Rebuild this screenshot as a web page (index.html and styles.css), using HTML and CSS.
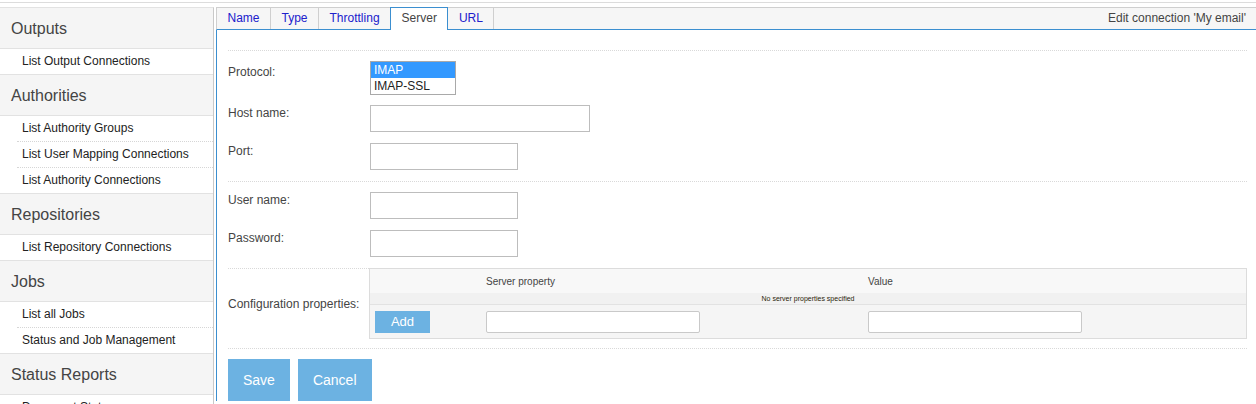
FILE: index.html
```html
<!DOCTYPE html>
<html lang="en">
<head>
<meta charset="utf-8">
<title>Edit connection</title>
<link rel="stylesheet" href="styles.css">
</head>
<body>
<div class="topline"></div>
<div class="layout">
  <nav class="sidebar">
    <div class="nav-head">Outputs</div>
    <ul class="nav-list">
      <li>List Output Connections</li>
    </ul>
    <div class="nav-head">Authorities</div>
    <ul class="nav-list">
      <li>List Authority Groups</li>
      <li>List User Mapping Connections</li>
      <li>List Authority Connections</li>
    </ul>
    <div class="nav-head">Repositories</div>
    <ul class="nav-list">
      <li>List Repository Connections</li>
    </ul>
    <div class="nav-head">Jobs</div>
    <ul class="nav-list">
      <li>List all Jobs</li>
      <li>Status and Job Management</li>
    </ul>
    <div class="nav-head">Status Reports</div>
    <ul class="nav-list">
      <li>Document Status</li>
      <li>Document Queue</li>
    </ul>
  </nav>
  <main class="main">
    <div class="tabbar">
      <ul class="tabs">
        <li class="tab">Name</li>
        <li class="tab">Type</li>
        <li class="tab">Throttling</li>
        <li class="tab active">Server</li>
        <li class="tab">URL</li>
      </ul>
      <div class="title">Edit connection 'My email'</div>
    </div>
    <div class="panel">
      <div class="sep"></div>
      <div class="row row-protocol">
        <div class="lbl lbl-protocol">Protocol:</div>
        <div class="listbox">
          <div class="opt selected">IMAP</div>
          <div class="opt">IMAP-SSL</div>
        </div>
      </div>
      <div class="row row-gap10">
        <div class="lbl">Host name:</div>
        <input class="text w-long" type="text">
      </div>
      <div class="row row-gap11">
        <div class="lbl">Port:</div>
        <input class="text w-short" type="text">
      </div>
      <div class="sep sep-gap"></div>
      <div class="row row-gap10">
        <div class="lbl">User name:</div>
        <input class="text w-short" type="text">
      </div>
      <div class="row row-gap11">
        <div class="lbl">Password:</div>
        <input class="text w-short" type="password">
      </div>
      <div class="sep sep-gap"></div>
      <div class="row row-config">
        <div class="lbl">Configuration properties:</div>
        <div class="props">
          <div class="props-head">
            <div></div>
            <div>Server property</div>
            <div>Value</div>
          </div>
          <div class="props-empty">No server properties specified</div>
          <div class="props-row">
            <div class="cell-add"><button class="btn-add" type="button">Add</button></div>
            <div><input class="prop-input" type="text"></div>
            <div><input class="prop-input" type="text"></div>
          </div>
        </div>
      </div>
      <div class="sep sep-after"></div>
      <div class="actions">
        <button class="btn" type="button">Save</button>
        <button class="btn" type="button">Cancel</button>
      </div>
    </div>
  </main>
</div>
</body>
</html>
```

FILE: styles.css
```css
html, body {
  margin: 0;
  padding: 0;
  overflow: hidden;
  background: #fff;
}

body {
  font-family: "Liberation Sans", Arial, sans-serif;
  color: #444;
}

.topline {
  height: 2px;
  border-bottom: 1px solid #dcdcdc;
}

.layout {
  display: flex;
  align-items: flex-start;
  padding-top: 4px;
}

/* Sidebar */
.sidebar {
  flex: none;
  width: 213px;
  border-top: 1px solid #e2e2e2;
  border-right: 1px solid #c9c9c9;
}

.nav-head {
  height: 40px;
  line-height: 41px;
  padding-left: 11px;
  font-size: 16px;
  color: #444;
  background: #f5f5f5;
  border-bottom: 1px solid #e2e2e2;
}

.nav-list {
  list-style: none;
  margin: 0;
  padding: 0;
}

.nav-list li {
  height: 25px;
  line-height: 25px;
  font-size: 12px;
  color: #222;
  background: #fff;
  margin-left: 17px;
  padding-left: 5px;
  border-bottom: 1px dotted #d6d6d6;
  white-space: nowrap;
}

.nav-list li:last-child {
  margin-left: 0;
  padding-left: 22px;
  border-bottom: 1px solid #e2e2e2;
}

/* Main */
.main {
  flex: 1;
  min-width: 0;
  margin-left: 2px;
}

.tabbar {
  display: flex;
  height: 21px;
  border-top: 1px solid #cfcfcf;
  border-left: 1px solid #cfcfcf;
  border-bottom: 1px solid #3b8fd0;
  background: #f6f6f6;
}

.tabs {
  display: flex;
  list-style: none;
  margin: 0;
  padding: 0;
}

.tab {
  padding: 0 10.5px;
  line-height: 21px;
  font-size: 12px;
  color: #2020cc;
  border-right: 1px solid #cfcfcf;
}

.tab.active {
  position: relative;
  height: 22px;
  margin: -1px 0 -1px -1px;
  color: #444;
  background: #fff;
  border: 1px solid #3b8fd0;
  border-bottom: none;
}

.title {
  margin-left: auto;
  padding-right: 10px;
  line-height: 21px;
  font-size: 12px;
  color: #444;
}

.panel {
  border-left: 1px solid #3b8fd0;
  padding: 20px 9px 0 11px;
}

.sep {
  border-top: 1px dotted #d9d9d9;
}

.sep-gap {
  margin-top: 11px;
}

.sep-after {
  margin-top: 9px;
}

.row {
  display: flex;
  align-items: flex-start;
}

.row-protocol {
  margin-top: 10px;
}

.row-gap10 {
  margin-top: 10px;
}

.row-gap11 {
  margin-top: 11px;
}

.lbl {
  flex: none;
  width: 142px;
  font-size: 12px;
  line-height: 16px;
  color: #444;
}

.lbl-protocol {
  padding-top: 3px;
}

.listbox {
  width: 84px;
  height: 32px;
  border: 1px solid #a9a9a9;
  background: #fff;
}

.opt {
  height: 16px;
  line-height: 16px;
  padding-left: 3px;
  font-size: 12px;
  color: #222;
}

.opt.selected {
  background: #3399ff;
  color: #fff;
}

.text {
  display: block;
  box-sizing: border-box;
  height: 27px;
  margin: 0;
  padding: 0 3px;
  border: 1px solid #bdbdbd;
  background: #fff;
  font: inherit;
}

.w-long {
  width: 220px;
}

.w-short {
  width: 148px;
}

/* Config properties */
.row-config {
  align-items: center;
  margin-top: -1px;
}

.props {
  flex: 1;
  margin-left: -1px;
  border: 1px solid #dcdcdc;
  background: #f5f5f5;
  font-size: 10px;
  color: #444;
}

.props-head,
.props-row {
  display: grid;
  grid-template-columns: 116px 382px 1fr;
}

.props-head {
  height: 24px;
  box-sizing: border-box;
  padding-top: 7px;
  line-height: 12px;
  background: #f8f8f8;
}

.props-empty {
  height: 11px;
  line-height: 11px;
  font-size: 7px;
  text-align: center;
  color: #2a1c08;
  background: #f1f1f1;
  border-bottom: 1px solid #e2e2e2;
}

.props-row {
  height: 33px;
  align-items: center;
}

.cell-add {
  padding-left: 5px;
}

.btn-add {
  display: block;
  width: 55px;
  height: 22px;
  padding: 0;
  border: none;
  background: #6cb2e2;
  color: #fff;
  font-family: inherit;
  font-size: 13px;
}

.prop-input {
  display: block;
  box-sizing: border-box;
  width: 214px;
  height: 22px;
  margin: 0;
  border: 1px solid #c9c9c9;
  border-radius: 2px;
  background: #fff;
}

.actions {
  display: flex;
  gap: 8px;
  margin-top: 10px;
}

.btn {
  height: 42px;
  padding: 0 15px;
  border: none;
  background: #6cb2e2;
  color: #fff;
  font-family: inherit;
  font-size: 14px;
}
```
